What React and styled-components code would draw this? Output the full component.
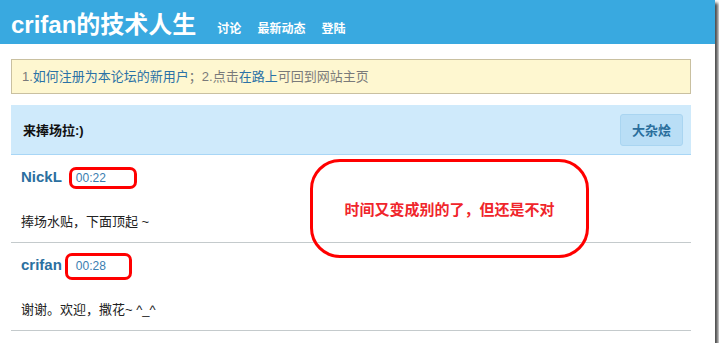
import styled, { createGlobalStyle } from 'styled-components'

const GlobalStyle = createGlobalStyle`
  html, body {
    margin: 0;
    padding: 0;
    background: #ffffff;
  }
  body {
    font-family: 'Liberation Sans', 'Noto Sans CJK SC', sans-serif;
  }
`

// #region styles
const Frame = styled.div`
  width: 715px;
  height: 343px;
  background: #ffffff;
  overflow: hidden;
  box-shadow: 3px 3px 3px rgba(0, 0, 0, 0.7);
`

const Header = styled.header`
  height: 44px;
  box-sizing: border-box;
  background: #39a9e0;
  display: flex;
  align-items: baseline;
  padding: 11px 11px 0;
`

const Brand = styled.h1`
  margin: 0;
  font-size: 24px;
  line-height: 28px;
  font-weight: 700;
  color: #ffffff;
`

const Nav = styled.nav`
  display: flex;
  gap: 16px;
  margin-left: 21px;
`

const NavLink = styled.a`
  font-size: 12px;
  font-weight: 700;
  color: #ffffff;
  text-decoration: none;
`

const Main = styled.main`
  position: relative;
  padding: 15px 24px 0 11px;
`

const Notice = styled.div`
  height: 35px;
  box-sizing: border-box;
  border: 1px solid #c9c0a0;
  background: #fef7d0;
  padding: 0 10px;
  font-size: 13px;
  line-height: 33px;
  color: #7a7a7a;
`

const Link = styled.a`
  color: #2b72a6;
  text-decoration: none;
`

const PanelHead = styled.div`
  margin-top: 11px;
  height: 50px;
  box-sizing: border-box;
  background: #cfeafb;
  border-bottom: 1px solid #a8d6f6;
  display: flex;
  align-items: center;
  justify-content: space-between;
  padding: 0 8px 0 12px;
`

const PanelTitle = styled.h2`
  margin: 0;
  font-size: 13px;
  font-weight: 700;
  color: #111111;
`

const TagButton = styled.button`
  height: 32px;
  padding: 0 11px;
  border: 1px solid #a9d5f1;
  border-radius: 3px;
  background: #b9def6;
  color: #2a6e9c;
  font-family: inherit;
  font-size: 13px;
  font-weight: 700;
`

const Post = styled.article`
  position: relative;
  padding: 11px 10px 10px;
  border-bottom: 1px solid #c4cacc;
`

const PostMeta = styled.div`
  height: 22px;
  display: flex;
  align-items: baseline;
`

const Author = styled.span`
  font-size: 15px;
  font-weight: 700;
  line-height: 22px;
  color: #2b6fa0;
`

const Time = styled.span`
  margin-left: ${({ $offset }) => $offset}px;
  font-size: 12px;
  color: #3a7db0;
`

const Body = styled.p`
  margin: 24px 0 0;
  font-size: 13px;
  line-height: 20px;
  color: #222222;
`

const Mark = styled.span`
  position: absolute;
  border: 3px solid #ff0000;
  border-radius: 7px;
  box-sizing: border-box;
`

const Callout = styled.div`
  position: absolute;
  left: 310px;
  top: 115px;
  width: 279px;
  height: 99px;
  box-sizing: border-box;
  border: 3px solid #ff0000;
  border-radius: 30px;
  display: flex;
  align-items: center;
  justify-content: center;
  font-size: 15px;
  font-weight: 700;
  color: #f0252b;
`
// #endregion

const posts = [
  { author: 'NickL', time: '00:22', offset: 14, body: '捧场水贴，下面顶起 ~', mark: { left: 58, top: 12, width: 68, height: 22 } },
  { author: 'crifan', time: '00:28', offset: 14, body: '谢谢。欢迎，撒花~ ^_^', mark: { left: 54, top: 10, width: 67, height: 27 } },
]

export default function App() {
  return (
    <>
      <GlobalStyle />
      <Frame>
        <Header>
          <Brand>crifan的技术人生</Brand>
          <Nav>
            <NavLink>讨论</NavLink>
            <NavLink>最新动态</NavLink>
            <NavLink>登陆</NavLink>
          </Nav>
        </Header>
        <Main>
          <Notice>
            1.<Link>如何注册为本论坛的新用户</Link>；2.点击<Link>在路上</Link>可回到网站主页
          </Notice>
          <PanelHead>
            <PanelTitle>来捧场拉:)</PanelTitle>
            <TagButton>大杂烩</TagButton>
          </PanelHead>
          {posts.map((p) => (
            <Post key={p.time}>
              <PostMeta>
                <Author>{p.author}</Author>
                <Time $offset={p.offset}>{p.time}</Time>
              </PostMeta>
              <Body>{p.body}</Body>
              <Mark style={p.mark} />
            </Post>
          ))}
          <Callout>时间又变成别的了，但还是不对</Callout>
        </Main>
      </Frame>
    </>
  )
}
